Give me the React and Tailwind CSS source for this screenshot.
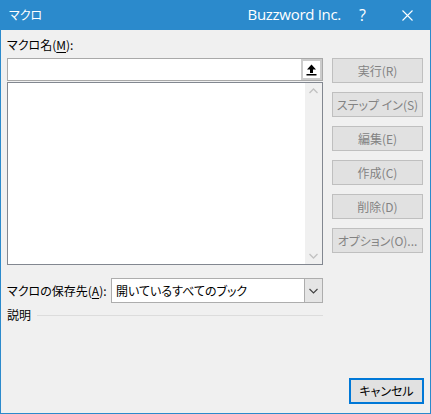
import React from "react";

const jp = { fontFamily: '"Noto Sans CJK JP", "Noto Sans", sans-serif' };

function Btn({ children }) {
  return (
    <div className="h-[25px] w-[91px] flex items-center justify-center border border-[#bfbfbf] bg-[#e1e1e1] text-[12px] text-[#838383] [font-feature-settings:'palt']">
      {children}
    </div>
  );
}

export default function App() {
  return (
    <div
      className="w-[431px] h-[414px] flex flex-col bg-[#f0f0f0] border-x border-b border-[#2b8acc] text-black overflow-hidden"
      style={jp}
    >
      {/* title bar */}
      <div className="h-[30px] -mx-px bg-[#2b8acc] flex items-center text-white shrink-0">
        <div className="pl-[9px] text-[12px] [font-feature-settings:'palt'] leading-none">マクロ</div>
        <div
          className="ml-auto text-[15px] tracking-[-0.3px] leading-none pb-[1px]"
          style={{ fontFamily: '"Open Sans", "Noto Sans", sans-serif' }}
        >
          Buzzword Inc.
        </div>
        <div className="ml-[18px] w-[10px] text-[16px] leading-none pb-[1px]" style={{ fontFamily: '"Open Sans", sans-serif' }}>?</div>
        <div className="ml-[33px] mr-[18px] w-[11px] h-[11px]">
          <svg width="11" height="11" viewBox="0 0 11 11">
            <path d="M0.5 0.5 L10.5 10.5 M10.5 0.5 L0.5 10.5" stroke="white" strokeWidth="1.1" />
          </svg>
        </div>
      </div>

      {/* body */}
      <div className="flex-1 flex flex-col px-[6px]">
        <div className="flex gap-[9px]">
          <div className="w-[316px] flex flex-col">
            <div className="h-[28px] flex items-center pt-[2px] text-[12px] [font-feature-settings:'palt']">
              マクロ名(<span className="underline underline-offset-2">M</span>):
            </div>
            <div className="h-[23px] flex border border-[#a9a9a9] bg-white">
              <div className="flex-1" />
              <div className="w-[21px] border-2 border-[#cccccc] bg-white flex items-center justify-center">
                <svg width="11" height="12" viewBox="0 0 11 12">
                  <path d="M5.5 0.5 L10 5.5 L7 5.5 L7 9 L4 9 L4 5.5 L1 5.5 Z" fill="black" />
                  <rect x="0.5" y="10" width="10" height="1.5" fill="black" />
                </svg>
              </div>
            </div>
            <div className="mt-[1px] h-[183px] flex border border-[#828790] bg-white">
              <div className="flex-1" />
              <div className="w-[17px] bg-[#f0f0f0] flex flex-col items-center justify-between py-[5px]">
                <svg width="9" height="6" viewBox="0 0 9 6">
                  <path d="M0.5 5 L4.5 1 L8.5 5" fill="none" stroke="#c2c2c2" strokeWidth="1.3" />
                </svg>
                <svg width="9" height="6" viewBox="0 0 9 6">
                  <path d="M0.5 1 L4.5 5 L8.5 1" fill="none" stroke="#c2c2c2" strokeWidth="1.3" />
                </svg>
              </div>
            </div>
          </div>
          <div className="w-[91px] flex flex-col gap-[9px] pt-[28px]">
            <Btn>実行(R)</Btn>
            <Btn>ステップ イン(S)</Btn>
            <Btn>編集(E)</Btn>
            <Btn>作成(C)</Btn>
            <Btn>削除(D)</Btn>
            <Btn>オプション(O)...</Btn>
          </div>
        </div>

        <div className="mt-[13px] w-[316px] flex items-center h-[25px]">
          <div className="w-[104px] text-[12px] [font-feature-settings:'palt']">
            マクロの保存先(<span className="underline underline-offset-2">A</span>):
          </div>
          <div className="flex-1 h-[25px] flex border border-[#adadad] bg-white">
            <div className="flex-1 flex items-center pl-[4px] text-[12px] [font-feature-settings:'palt']">
              開いているすべてのブック
            </div>
            <div className="w-[18px] bg-[#e5e5e5] border-l border-[#adadad] flex items-center justify-center">
              <svg width="9" height="6" viewBox="0 0 9 6">
                <path d="M0.5 1 L4.5 5 L8.5 1" fill="none" stroke="#404040" strokeWidth="1.1" />
              </svg>
            </div>
          </div>
        </div>

        <div className="mt-[5px] w-[316px] h-[14px] flex items-center">
          <div className="text-[12px] leading-none">説明</div>
          <div className="ml-[6px] flex-1 h-px bg-[#dcdcdc]" />
        </div>

        <div className="mt-auto mb-[9px] flex justify-end">
          <div className="w-[75px] h-[26px] border-2 border-[#0078d7] bg-[#e1e1e1] flex items-center justify-center text-[12px] [font-feature-settings:'palt']">
            キャンセル
          </div>
        </div>
      </div>
    </div>
  );
}
